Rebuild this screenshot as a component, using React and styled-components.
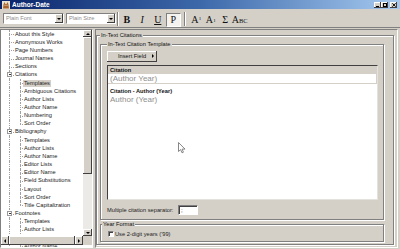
import React from 'react'
import styled, { createGlobalStyle, css } from 'styled-components'

const GlobalStyle = createGlobalStyle`
  html, body { margin: 0; padding: 0; }
  body {
    width: 400px;
    height: 249px;
    overflow: hidden;
    background: #d4d0c8;
    font-family: "Liberation Sans", Arial, sans-serif;
    color: #000;
  }
  * { box-sizing: border-box; }
`

const raised = css`
  background: #d4d0c8;
  box-shadow: inset -1px -1px 0 #404040, inset 1px 1px 0 #fff;
`

const sunken = css`
  border: 1px solid;
  border-color: #808080 #fff #fff #808080;
`

const Window = styled.div`
  width: 400px;
  height: 249px;
  display: flex;
  flex-direction: column;
  background: #d4d0c8;
  overflow: hidden;
`

const TitleBar = styled.div`
  height: 9px;
  flex-shrink: 0;
  display: flex;
  align-items: center;
  padding: 0 3px 0 2px;
  margin-bottom: 1px;
  background: linear-gradient(to right, #0a246a 0%, #3c68aa 50%, #a6caf0 100%);
`

const TitleText = styled.span`
  flex: 1;
  margin-left: 2px;
  font-size: 6.5px;
  font-weight: bold;
  line-height: 9px;
  color: #fff;
`

const CaptionButton = styled.span`
  width: 7px;
  height: 6px;
  margin-left: ${p => (p.$spaced ? '2px' : '0')};
  display: flex;
  align-items: center;
  justify-content: center;
  ${raised};
`

const Toolbar = styled.div`
  height: 18px;
  flex-shrink: 0;
  display: flex;
  align-items: center;
  padding-left: 3px;
  border-bottom: 1px solid #808080;
`

const Combo = styled.div`
  width: ${p => p.$w}px;
  height: 11px;
  margin-right: ${p => p.$mr}px;
  display: flex;
  background: #fff;
  ${sunken};
`

const ComboText = styled.span`
  flex: 1;
  padding-left: 2px;
  font-size: 5.7px;
  line-height: 9px;
  color: #8c8c8c;
`

const ComboArrow = styled.span`
  width: 8px;
  height: 100%;
  display: flex;
  align-items: center;
  justify-content: center;
  ${raised};
  &::after {
    content: '';
    border-left: 2px solid transparent;
    border-right: 2px solid transparent;
    border-top: 2px solid #000;
  }
`

const ToolSep = styled.span`
  width: 2px;
  height: 14px;
  margin: 0 ${p => p.$m}px;
  border-left: 1px solid #808080;
  border-right: 1px solid #fff;
`

const ToolButton = styled.span`
  width: ${p => p.$w}px;
  height: 14px;
  margin-top: 2px;
  display: flex;
  align-items: center;
  justify-content: center;
  font-family: "Liberation Serif", "Times New Roman", serif;
  font-size: 10px;
  color: #111;
  font-weight: ${p => (p.$bold ? 'bold' : 'normal')};
  font-style: ${p => (p.$italic ? 'italic' : 'normal')};
  text-decoration: ${p => (p.$underline ? 'underline' : 'none')};
  border: 1px solid;
  border-color: ${p => (p.$pressed ? '#808080 #fff #fff #808080' : 'transparent')};
  background: ${p => (p.$pressed ? '#f4f3f0' : 'transparent')};
`

const Script = styled.span`
  font-size: 5px;
  align-self: ${p => (p.$sub ? 'flex-end' : 'flex-start')};
  margin: ${p => (p.$sub ? '0 0 3px 0.5px' : '2px 0 0 0.5px')};
`

const SmallCaps = styled.span`
  font-size: 6.5px;
  margin-top: 2px;
`

const Main = styled.div`
  flex: 1;
  min-height: 0;
  display: flex;
  gap: 2px;
  padding: 1px 2px 1px 0;
`

const TreePane = styled.div`
  width: 93px;
  flex-shrink: 0;
  display: flex;
  flex-direction: column;
  background: #fff;
  overflow: hidden;
  ${sunken};
`

const TreeView = styled.div`
  height: 206px;
  flex-shrink: 0;
  display: flex;
`

const TreeBody = styled.div`
  flex: 1;
  overflow: hidden;
`

const TreeTail = styled.div`
  flex: 1;
  overflow: hidden;
  & > div { margin-top: -3px; }
`

const Row = styled.div`
  height: 8.16px;
  display: flex;
  align-items: stretch;
  font-size: 5.7px;
  white-space: nowrap;
`

const Gutter = styled.span`
  position: relative;
  width: ${p => p.$w}px;
  flex-shrink: 0;
  &::before {
    content: ${p => (p.$v ? "''" : 'none')};
    position: absolute;
    left: ${p => p.$x}px;
    top: 0;
    bottom: ${p => (p.$v === 'half' ? '50%' : '0')};
    border-left: 1px dotted #a0a0a0;
  }
  &::after {
    content: ${p => (p.$h ? "''" : 'none')};
    position: absolute;
    left: ${p => p.$x}px;
    right: 0;
    top: 50%;
    border-top: 1px dotted #a0a0a0;
  }
`

const Expander = styled.span`
  position: absolute;
  z-index: 1;
  left: ${p => p.$x - 2}px;
  top: 50%;
  width: 5px;
  height: 5px;
  margin-top: -2.5px;
  background: #fff;
  border: 1px solid #9a9a9a;
  &::after {
    content: '';
    position: absolute;
    left: 0.5px;
    right: 0.5px;
    top: 1px;
    border-top: 1px solid #333;
  }
`

const TreeLabel = styled.span`
  align-self: center;
  padding: 0 1px;
  line-height: 7px;
  color: #222;
  background: ${p => (p.$selected ? '#d4d0c8' : 'transparent')};
`

const VScroll = styled.div`
  width: 9px;
  flex-shrink: 0;
  display: flex;
  flex-direction: column;
  background: #ebeae6;
`

const HScroll = styled.div`
  height: 9px;
  flex-shrink: 0;
  display: flex;
  background: #ebeae6;
`

const arrows = {
  up: css`border-left: 2px solid transparent; border-right: 2px solid transparent; border-bottom: 2px solid #000;`,
  down: css`border-left: 2px solid transparent; border-right: 2px solid transparent; border-top: 2px solid #000;`,
  left: css`border-top: 2px solid transparent; border-bottom: 2px solid transparent; border-right: 2px solid #000;`,
  right: css`border-top: 2px solid transparent; border-bottom: 2px solid transparent; border-left: 2px solid #000;`,
}

const ScrollArrow = styled.span`
  width: ${p => p.$w}px;
  height: ${p => p.$h}px;
  flex-shrink: 0;
  display: flex;
  align-items: center;
  justify-content: center;
  ${raised};
  &::after {
    content: '';
    ${p => arrows[p.$dir]};
  }
`

const Thumb = styled.span`
  flex: ${p => (p.$fill ? 1 : 'none')};
  height: ${p => (p.$size ? `${p.$size}px` : 'auto')};
  ${raised};
`

const Track = styled.span`
  flex: 1;
`

const Corner = styled.span`
  width: 9px;
  flex-shrink: 0;
  background: #d4d0c8;
`

const RightPane = styled.div`
  position: relative;
  flex: 1;
  display: flex;
  flex-direction: column;
  padding: 2px 3px 2px 0;
  ${sunken};
`

const Group = styled.fieldset`
  margin: ${p => p.$margin || 0};
  padding: ${p => p.$pad};
  min-width: 0;
  flex: ${p => (p.$grow ? 1 : 'none')};
  display: flex;
  flex-direction: column;
  align-items: flex-start;
  border: 1px solid #808080;
  box-shadow: inset 1px 1px 0 #fff, 1px 1px 0 #fff;
`

const Legend = styled.legend`
  padding: 0 1px;
  font-size: 5.7px;
  line-height: 7px;
  color: #111;
  background: #d4d0c8;
`

const PushButton = styled.span`
  width: 50px;
  height: 11px;
  display: flex;
  align-items: center;
  padding-left: 11px;
  font-size: 5.7px;
  color: #111;
  ${raised};
  &::after {
    content: '';
    margin-left: 6px;
    border-top: 2px solid transparent;
    border-bottom: 2px solid transparent;
    border-left: 2px solid #000;
  }
`

const TemplateList = styled.div`
  align-self: stretch;
  height: 135px;
  margin-top: 3px;
  background: #fff;
  border: 1px solid;
  border-color: #404040 #e4e2dc #e4e2dc #404040;
`

const TemplateItem = styled.div`
  margin-top: ${p => (p.$first ? 0 : 3)}px;
`

const TemplateHeader = styled.div`
  height: 8px;
  padding-left: 2px;
  font-size: 5.7px;
  font-weight: bold;
  line-height: 8px;
  color: #111;
  background: ${p => (p.$active ? '#d4d0c8' : 'transparent')};
`

const TemplateField = styled.div`
  height: 10px;
  padding-left: 2px;
  font-size: 8px;
  line-height: 10px;
  color: #8f8f8f;
  border-right: 1px solid ${p => (p.$active ? '#d4d0c8' : 'transparent')};
  border-bottom: 1px solid ${p => (p.$active ? '#d4d0c8' : 'transparent')};
`

const FieldRow = styled.div`
  margin-top: 5px;
  display: flex;
  align-items: center;
  height: 10px;
`

const FieldLabel = styled.span`
  width: 71px;
  font-size: 5.7px;
  color: #222;
`

const TextInput = styled.span`
  width: 20px;
  height: 10px;
  padding-left: 2px;
  font-size: 6px;
  line-height: 8px;
  background: #fff;
  ${sunken};
  box-shadow: inset 1px 1px 0 #404040;
`

const CheckRow = styled.label`
  display: flex;
  align-items: center;
  height: 7px;
  padding-left: 6px;
  font-size: 5.7px;
  color: #222;
`

const CheckBox = styled.span`
  width: 6px;
  height: 6px;
  margin-right: 1px;
  background: #fff;
  ${sunken};
  box-shadow: inset 1px 1px 0 #404040;
`

const Pointer = styled.svg`
  position: absolute;
  left: 82px;
  top: 112px;
`

const tree = [
  { label: 'About this Style' },
  { label: 'Anonymous Works' },
  { label: 'Page Numbers' },
  { label: 'Journal Names' },
  { label: 'Sections' },
  { label: 'Citations', children: ['Templates', 'Ambiguous Citations', 'Author Lists', 'Author Name', 'Numbering', 'Sort Order'] },
  { label: 'Bibliography', children: ['Templates', 'Author Lists', 'Author Name', 'Editor Lists', 'Editor Name', 'Field Substitutions', 'Layout', 'Sort Order', 'Title Capitalization'] },
  { label: 'Footnotes', children: ['Templates', 'Author Lists', 'Author Name'] },
]

const rows = []
tree.forEach(node => {
  rows.push({ label: node.label, level: 0, expandable: !!node.children })
  node.children?.forEach((child, j) => {
    rows.push({
      label: child,
      level: 1,
      last: j === node.children.length - 1,
      selected: node.label === 'Citations' && child === 'Templates',
    })
  })
})

const templates = [
  { name: 'Citation', value: '(Author Year)', active: true },
  { name: 'Citation - Author (Year)', value: 'Author (Year)' },
]

const TreeRow = ({ row }) => (
  <Row>
    {row.level === 0 ? (
      <Gutter $w={13} $x={8} $v="full" $h>
        {row.expandable && <Expander $x={8} />}
      </Gutter>
    ) : (
      <>
        <Gutter $w={13} $x={8} $v="full" />
        <Gutter $w={9} $x={6} $v={row.last ? 'half' : 'full'} $h />
      </>
    )}
    <TreeLabel $selected={row.selected}>{row.label}</TreeLabel>
  </Row>
)

const App = () => {
  const bodyRows = rows.slice(0, -1)
  const tailRow = rows[rows.length - 1]

  return (
    <>
      <GlobalStyle />
      <Window>
        <TitleBar>
          <svg width="8" height="8" viewBox="0 0 8 8">
            <rect width="8" height="8" fill="#e9e2d2" />
            <path d="M1 7.5 L1.6 3 L2.6 1 L3.4 3 L4.6 3 L5.4 1 L6.4 3 L7 7.5 Z" fill="#a8642c" />
            <rect x="2.6" y="3.8" width="0.9" height="0.9" fill="#fff" />
            <rect x="4.5" y="3.8" width="0.9" height="0.9" fill="#fff" />
          </svg>
          <TitleText>Author-Date</TitleText>
          <CaptionButton>
            <svg width="4" height="4" viewBox="0 0 4 4"><rect x="0" y="3" width="3" height="1" fill="#000" /></svg>
          </CaptionButton>
          <CaptionButton>
            <svg width="4" height="4" viewBox="0 0 4 4"><rect x="0.5" y="0.5" width="3" height="3" fill="none" stroke="#000" strokeWidth="1" /></svg>
          </CaptionButton>
          <CaptionButton $spaced>
            <svg width="4" height="4" viewBox="0 0 4 4"><path d="M0.3 0.3 L3.7 3.7 M3.7 0.3 L0.3 3.7" stroke="#000" strokeWidth="0.9" /></svg>
          </CaptionButton>
        </TitleBar>

        <Toolbar>
          <Combo $w={61} $mr={2}>
            <ComboText>Plain Font</ComboText>
            <ComboArrow />
          </Combo>
          <Combo $w={50} $mr={0}>
            <ComboText>Plain Size</ComboText>
            <ComboArrow />
          </Combo>
          <ToolSep $m={0.5} />
          <ToolButton $w={15.5} $bold>B</ToolButton>
          <ToolButton $w={15.5} $italic>I</ToolButton>
          <ToolButton $w={15.5} $underline>U</ToolButton>
          <ToolButton $w={15.5} $pressed>P</ToolButton>
          <ToolSep $m={3} />
          <ToolButton $w={14.5}>A<Script>1</Script></ToolButton>
          <ToolButton $w={14.5}>A<Script $sub>1</Script></ToolButton>
          <ToolButton $w={14.5}>Σ</ToolButton>
          <ToolButton $w={14.5}>A<SmallCaps>BC</SmallCaps></ToolButton>
        </Toolbar>

        <Main>
          <TreePane>
            <TreeView>
              <TreeBody>
                {bodyRows.map((row, i) => <TreeRow key={i} row={row} />)}
              </TreeBody>
              <VScroll>
                <ScrollArrow $w={9} $h={7} $dir="up" />
                <Thumb $size={137} />
                <Track />
                <ScrollArrow $w={9} $h={7} $dir="down" />
              </VScroll>
            </TreeView>
            <HScroll>
              <ScrollArrow $w={8} $h={9} $dir="left" />
              <Thumb $fill />
              <ScrollArrow $w={8} $h={9} $dir="right" />
              <Corner />
            </HScroll>
            <TreeTail>
              <TreeRow row={tailRow} />
            </TreeTail>
          </TreePane>

          <RightPane>
            <Group $grow $pad="2px 9px 2px 3px">
              <Legend>In-Text Citations</Legend>
              <Group $pad="2.5px 5px 4px 6px" style={{ alignSelf: 'stretch' }}>
                <Legend>In-Text Citation Template</Legend>
                <PushButton>Insert Field</PushButton>
                <TemplateList>
                  {templates.map((t, i) => (
                    <TemplateItem key={t.name} $first={i === 0}>
                      <TemplateHeader $active={t.active}>{t.name}</TemplateHeader>
                      <TemplateField $active={t.active}>{t.value}</TemplateField>
                    </TemplateItem>
                  ))}
                </TemplateList>
                <FieldRow>
                  <FieldLabel>Multiple citation separator:</FieldLabel>
                  <TextInput>;</TextInput>
                </FieldRow>
              </Group>
              <Group $pad="3px 5px 3px 1px" $margin="1px 0 0 0" style={{ alignSelf: 'stretch' }}>
                <Legend>Year Format</Legend>
                <CheckRow>
                  <CheckBox />
                  Use 2-digit years ('99)
                </CheckRow>
              </Group>
            </Group>
            <Pointer width="8" height="12" viewBox="0 0 8 12">
              <path d="M0.5 0.5 V9.5 L2.6 7.6 L4 10.8 L5.4 10.2 L4.1 7.1 L7 7.1 Z" fill="#fff" stroke="#6a6a6a" strokeWidth="0.8" />
            </Pointer>
          </RightPane>
        </Main>
      </Window>
    </>
  )
}

export default App
